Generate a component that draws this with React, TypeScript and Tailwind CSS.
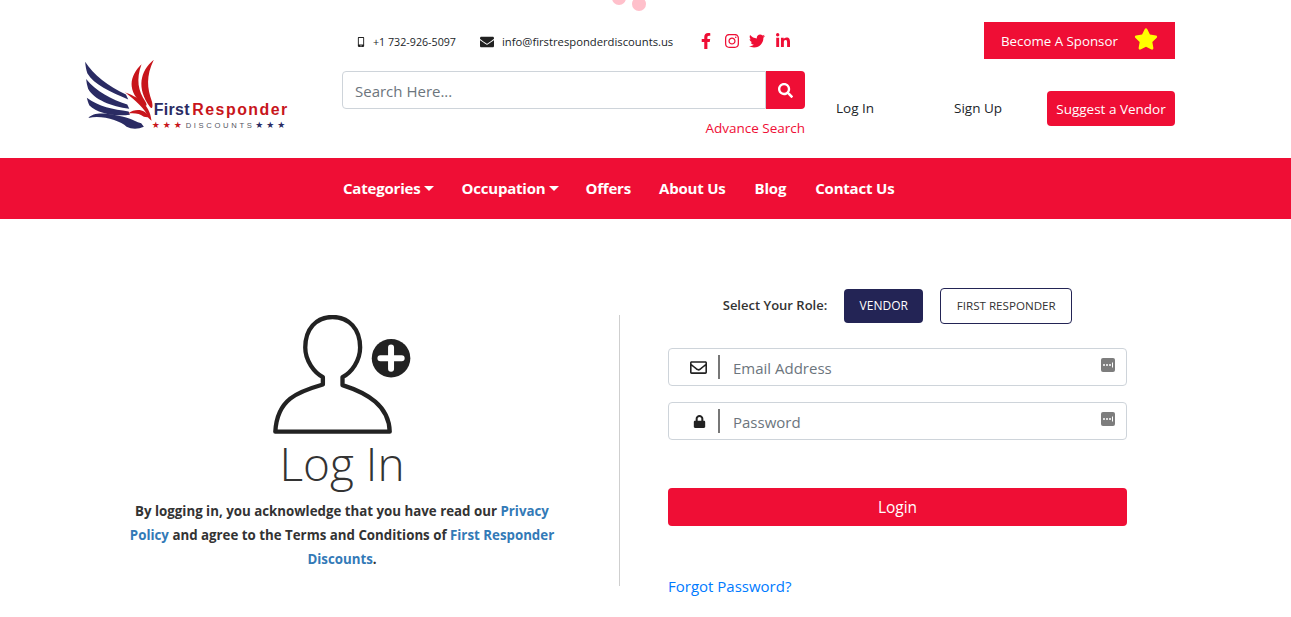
import React from 'react';
import { FaEnvelope, FaFacebookF, FaInstagram, FaLinkedinIn, FaLock, FaMobileAlt, FaRegEnvelope, FaSearch, FaStar, FaTwitter } from 'react-icons/fa';

const Logo: React.FC = () => (
  <svg width="205" height="73" viewBox="40 25 615 220">
    {/* navy wing */}
    <g fill="#2a2b63">
      <path d="M45 36 C70 75 115 110 168 135 L175 150 C120 128 72 105 52 72 C48 60 46 48 45 36 Z" />
      <path d="M48 88 C78 125 125 150 172 165 L178 178 C125 172 70 150 54 118 C51 108 49 98 48 88 Z" />
      <path d="M50 145 C85 172 130 180 176 186 L180 196 C135 202 82 192 58 168 C54 160 52 152 50 145 Z" />
      <path d="M55 206 C72 184 125 192 180 208 C190 212 200 218 214 222 L222 232 C205 240 185 240 170 232 C150 214 95 196 55 206 Z" />
    </g>
    {/* red crest and head */}
    <g fill="#c8151b">
      <path d="M215 44 C178 80 170 125 222 168 C232 172 232 165 226 155 C205 125 198 90 215 44 Z" />
      <path d="M252 30 C210 65 200 115 240 172 C248 182 250 170 246 155 C232 115 228 80 252 30 Z" />
      <path d="M165 128 C200 142 240 160 245 214 L236 206 C228 178 195 152 165 128 Z" />
      <path d="M174 192 C198 176 226 178 238 204 L222 202 C210 192 195 190 174 192 Z" />
    </g>
    <text x="252" y="198" fontFamily="Liberation Sans, sans-serif" fontWeight="700" fontSize="48" letterSpacing="1" fill="#2a2b63">First</text>
    <text x="368" y="198" fontFamily="Liberation Sans, sans-serif" fontWeight="700" fontSize="48" letterSpacing="4.5" fill="#c8151b">Responder</text>
    <text x="246" y="237" fontFamily="DejaVu Sans, sans-serif" fontSize="27" letterSpacing="9" fill="#c8151b">★★★</text>
    <text x="348" y="236" fontFamily="Liberation Sans, sans-serif" fontSize="23" letterSpacing="8" fill="#55565f">DISCOUNTS</text>
    <text x="558" y="237" fontFamily="DejaVu Sans, sans-serif" fontSize="27" letterSpacing="9" fill="#2a2b63">★★★</text>
  </svg>
);

const KeyBadge: React.FC = () => (
  <svg width="14" height="14" viewBox="0 0 14 14" className="absolute right-[11px] top-[9px]">
    <rect width="14" height="14" rx="2" fill="#7d7d7d" />
    <circle cx="3" cy="7" r="1" fill="#fff" />
    <circle cx="6" cy="7" r="1" fill="#fff" />
    <circle cx="9" cy="7" r="1" fill="#fff" />
    <rect x="11" y="4.5" width="1" height="5" fill="#fff" />
  </svg>
);

const UserPlus: React.FC = () => (
  <svg width="138" height="119" viewBox="36 28 415 356">
    <path
      d="M215 33 C165 33 133 70 133 125 C133 165 160 200 186 214 L186 236 C110 258 48 280 43 378 L387 378 C385 300 320 262 245 238 L245 214 C272 200 298 165 298 125 C298 70 265 33 215 33 Z"
      fill="none"
      stroke="#222"
      strokeWidth="13"
      strokeLinejoin="round"
    />
    <circle cx="391" cy="157" r="58" fill="#222" />
    <path d="M391 125 L391 189 M359 157 L423 157" stroke="#fff" strokeWidth="18" strokeLinecap="round" />
  </svg>
);

const Caret: React.FC = () => (
  <span className="ml-[4px] border-x-[5px] border-t-[5px] border-x-transparent border-t-white" />
);

const App: React.FC = () => {
  return (
    <div className="relative min-h-[617px] overflow-hidden bg-white font-['Open_Sans',sans-serif] text-[#212529]">
      {/* loader dots */}
      <div className="absolute left-[612px] top-[-9px] h-[14px] w-[14px] rounded-full bg-[#ffc0cb]" />
      <div className="absolute left-[632px] top-[-3px] h-[14px] w-[14px] rounded-full bg-[#ffc0cb]" />

      <header className="flex h-[158px] pl-[83px] pr-[116px]">
        <div className="w-[259px] pt-[58px]">
          <Logo />
        </div>
        <div className="w-[463px]">
          <div className="flex h-[71px] items-center pt-[13px] pl-[14px]">
            <FaMobileAlt className="text-[10px] text-[#212121]" />
            <span className="ml-[7px] text-[10.7px]">+1 732-926-5097</span>
            <FaEnvelope className="ml-[24px] text-[14px] text-[#212121]" />
            <span className="ml-[8px] text-[11.25px]">info@firstresponderdiscounts.us</span>
            <div className="mb-[2px] ml-[25px] flex items-center gap-[9.5px] text-[16px] text-[#ef0e35]">
              <FaFacebookF />
              <FaInstagram />
              <FaTwitter />
              <FaLinkedinIn />
            </div>
          </div>
          <div className="flex h-[38px]">
            <div className="flex flex-1 items-center rounded-l border border-[#ced4da] pl-[12px] pt-[3px] text-[15px] text-[#6c757d]">
              Search Here...
            </div>
            <div className="flex w-[39px] items-center justify-center rounded-r bg-[#ef0e35] text-[15px] text-white">
              <FaSearch />
            </div>
          </div>
          <div className="mt-[9px] text-right text-[13.5px] text-[#ef0e35]">Advance Search</div>
        </div>
        <div className="flex-1">
          <div className="flex justify-end pt-[22px]">
            <div className="flex h-[37px] w-[191px] items-center bg-[#ef0e35] pl-[17px] pt-[3px] text-[13.3px] font-medium text-white">
              Become A Sponsor
              <FaStar className="mb-[6px] ml-[16px] text-[24px] text-[#ffff00]" />
            </div>
          </div>
          <div className="mt-[32px] flex h-[35px] items-center text-[13.5px]">
            <span className="ml-[31px]">Log In</span>
            <span className="ml-[80px]">Sign Up</span>
            <div className="ml-auto flex h-[35px] w-[128px] items-center justify-center rounded bg-[#ef0e35] pt-[1px] text-[13.5px] font-medium text-white">
              Suggest a Vendor
            </div>
          </div>
        </div>
      </header>

      <nav className="flex h-[61px] items-center bg-[#ef0e35] pb-[1px] pl-[343px] text-[15px] font-bold tracking-[-0.2px] text-white">
        <span>Categories</span>
        <Caret />
        <span className="ml-[27px]">Occupation</span>
        <Caret />
        <span className="ml-[26px]">Offers</span>
        <span className="ml-[28px]">About Us</span>
        <span className="ml-[29px]">Blog</span>
        <span className="ml-[29px]">Contact Us</span>
      </nav>

      <main className="flex pl-[85px] pr-[116px]">
        <div className="mt-[96px] flex h-[271px] w-[535px] flex-col items-center border-r border-[#cfcfcf] pr-[20px]">
          <UserPlus />
          <h1 className="mt-[-1px] text-[46px] font-light leading-[60px] text-[#333]">Log In</h1>
          <p className="mt-[6px] w-[440px] text-center text-[13.3px] font-bold leading-[24px] text-[#333]">
            By logging in, you acknowledge that you have read our <span className="text-[#337ab7]">Privacy</span>
            <br />
            <span className="text-[#337ab7]">Policy</span> and agree to the Terms and Conditions of <span className="text-[#337ab7]">First Responder</span>
            <br />
            <span className="text-[#337ab7]">Discounts</span>.
          </p>
        </div>
        <div className="flex-1 px-[48px] pt-[69px]">
          <div className="flex h-[36px] items-center justify-center">
            <span className="text-[13px] font-semibold text-[#333]">Select Your Role:</span>
            <div className="ml-[17px] flex h-[34px] w-[79px] items-center justify-center rounded bg-[#232455] text-[12px] font-medium text-white">VENDOR</div>
            <div className="ml-[17px] flex h-[36px] w-[132px] items-center justify-center rounded border border-[#232455] text-[11.6px] text-[#333]">FIRST RESPONDER</div>
          </div>
          <div className="relative mt-[24px] flex h-[38px] items-center rounded border border-[#ced4da]">
            <FaRegEnvelope className="ml-[21px] text-[17px] text-[#222]" />
            <span className="ml-[11px] h-[24px] w-[2px] bg-[#777]" />
            <span className="ml-[13px] pt-[2px] text-[15px] text-[#6c757d]">Email Address</span>
            <KeyBadge />
          </div>
          <div className="relative mt-[16px] flex h-[38px] items-center rounded border border-[#ced4da]">
            <FaLock className="ml-[24px] text-[13px] text-[#222]" />
            <span className="ml-[12px] h-[24px] w-[2px] bg-[#777]" />
            <span className="ml-[13px] pt-[2px] text-[15px] text-[#6c757d]">Password</span>
            <KeyBadge />
          </div>
          <div className="mt-[48px] flex h-[38px] items-center justify-center rounded bg-[#ef0e35] pt-[1px] text-[15.5px] font-medium text-white">Login</div>
          <div className="mt-[49px] text-[15px] text-[#007bff]">Forgot Password?</div>
        </div>
      </main>
    </div>
  );
};

export default App;
